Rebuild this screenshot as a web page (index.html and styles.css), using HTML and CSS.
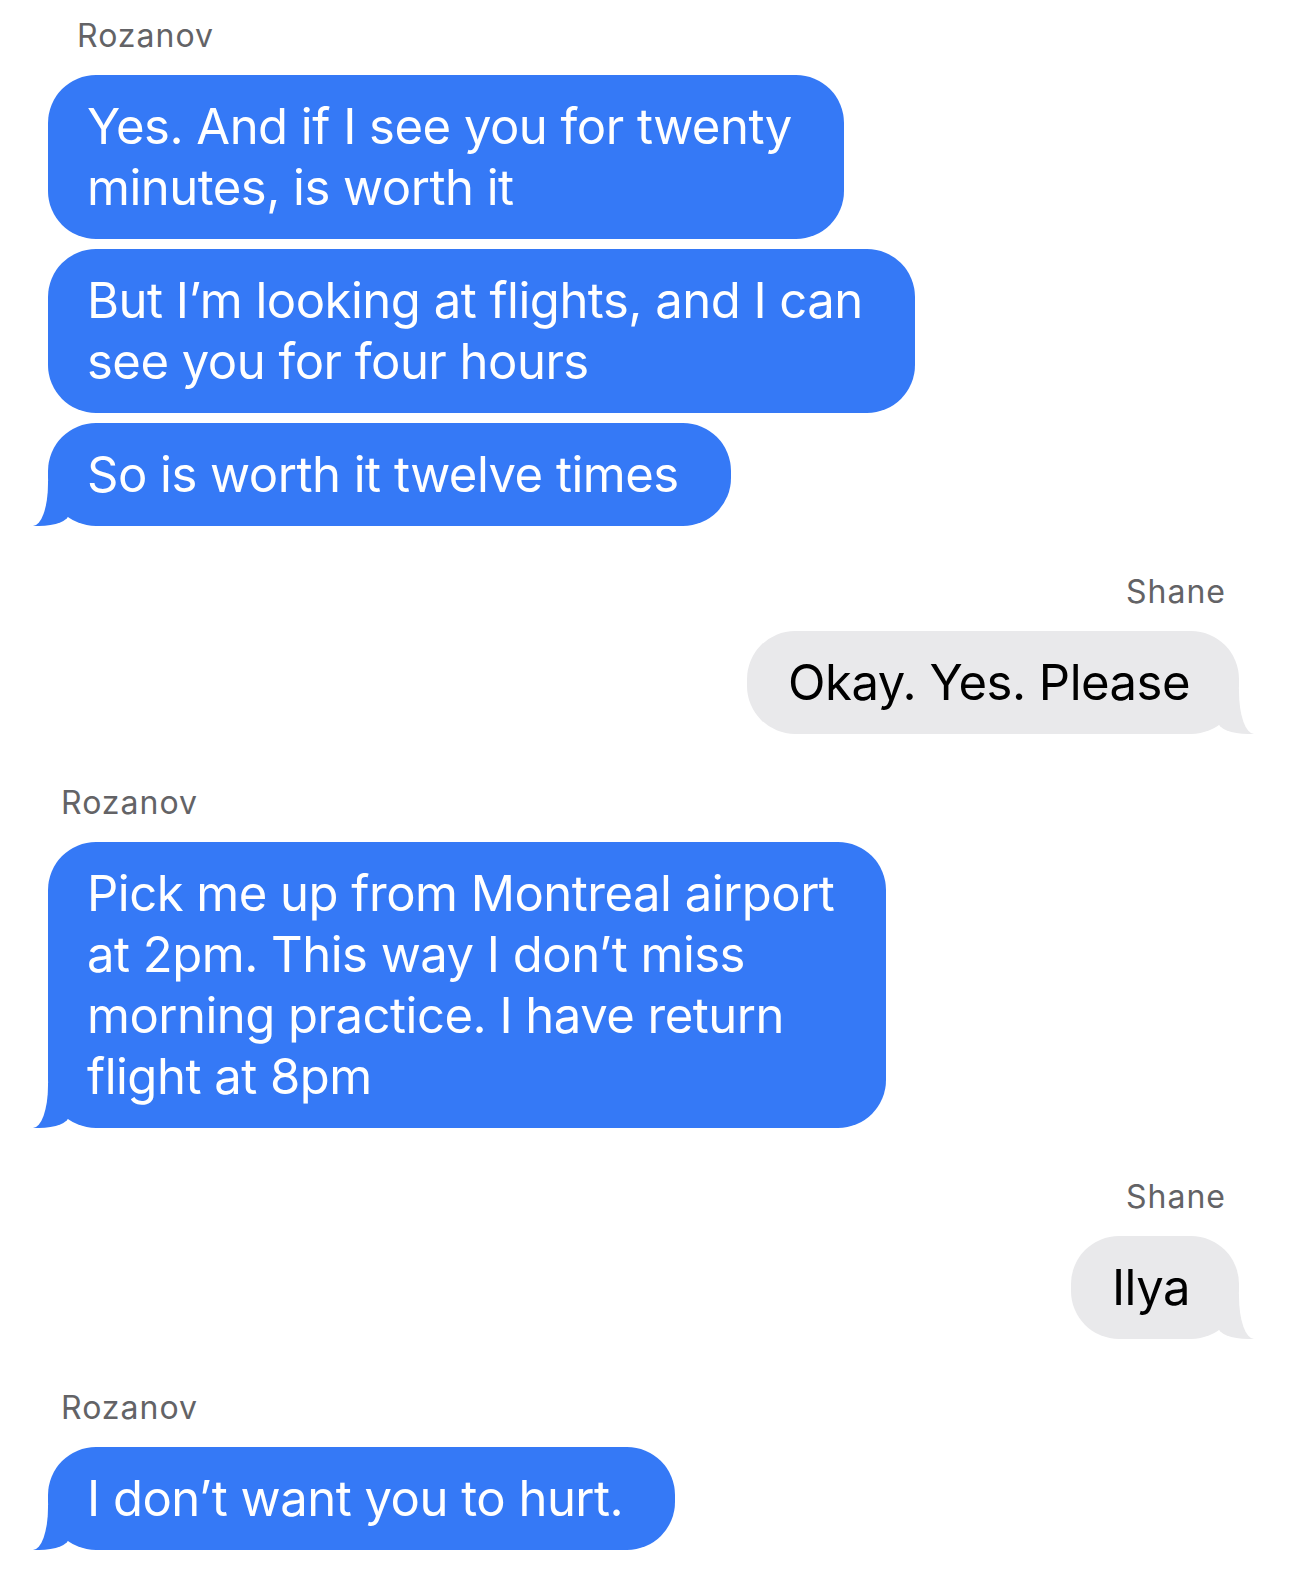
FILE: index.html
```html
<!DOCTYPE html>
<html lang="en">
<head>
  <meta charset="UTF-8" />
  <meta name="viewport" content="width=device-width, initial-scale=1.0" />
  <title>Messages</title>
  <link rel="stylesheet" href="styles.css">
</head>
<body>
  <div class="chat">
    <div class="group them first">
      <div class="name">Rozanov</div>
      <div class="bubble">Yes. And if I see you for twenty<br>minutes, is worth it</div>
      <div class="bubble">But I’m looking at flights, and I can<br>see you for four hours</div>
      <div class="bubble tail">So is worth it twelve times</div>
    </div>
    <div class="group me">
      <div class="name">Shane</div>
      <div class="bubble tail">Okay. Yes. Please</div>
    </div>
    <div class="group them">
      <div class="name">Rozanov</div>
      <div class="bubble tail">Pick me up from Montreal airport<br>at 2pm. This way I don’t miss<br>morning practice. I have return<br>flight at 8pm</div>
    </div>
    <div class="group me">
      <div class="name">Shane</div>
      <div class="bubble tail">Ilya</div>
    </div>
    <div class="group them">
      <div class="name">Rozanov</div>
      <div class="bubble tail">I don’t want you to hurt.</div>
    </div>
  </div>
</body>
</html>
```

FILE: styles.css
```css
body {
  margin: 0;
  background: #fff;
  font-family: Inter, "Noto Sans", sans-serif;
}
.chat {
  padding: 16px 51px 0 48px;
  display: flex;
  flex-direction: column;
  gap: 49px;
}
.group {
  display: flex;
  flex-direction: column;
  align-items: flex-start;
}
.group.me {
  align-items: flex-end;
}
.group.first {
  margin-bottom: -3px;
}
.name {
  font-size: 32px;
  line-height: 40px;
  letter-spacing: 1px;
  color: #636366;
  margin: 0 13px 19px;
}
.first .name {
  margin-left: 29px;
}
.bubble {
  position: relative;
  white-space: nowrap;
  padding: 21px 52px 21px 39px;
  border-radius: 48px;
  font-size: 49px;
  line-height: 61px;
  letter-spacing: -0.5px;
  background: #3579f6;
  color: #fff;
}
.bubble + .bubble {
  margin-top: 10px;
}
.me .bubble {
  padding: 21px 49px 21px 41px;
  background: #e9e9eb;
  color: #000;
}

/* tails */
.them .tail::before {
  content: "";
  position: absolute;
  left: -15px;
  bottom: 0;
  width: 36px;
  height: 45px;
  background: #3579f6;
  border-bottom-right-radius: 30px 12px;
}
.them .tail::after {
  content: "";
  position: absolute;
  left: -30px;
  bottom: 0;
  width: 30px;
  height: 46px;
  background: #fff;
  border-bottom-right-radius: 15px 42px;
}
.me .tail::before {
  content: "";
  position: absolute;
  right: -15px;
  bottom: 0;
  width: 36px;
  height: 45px;
  background: #e9e9eb;
  border-bottom-left-radius: 30px 12px;
}
.me .tail::after {
  content: "";
  position: absolute;
  right: -30px;
  bottom: 0;
  width: 30px;
  height: 46px;
  background: #fff;
  border-bottom-left-radius: 15px 42px;
}
```
